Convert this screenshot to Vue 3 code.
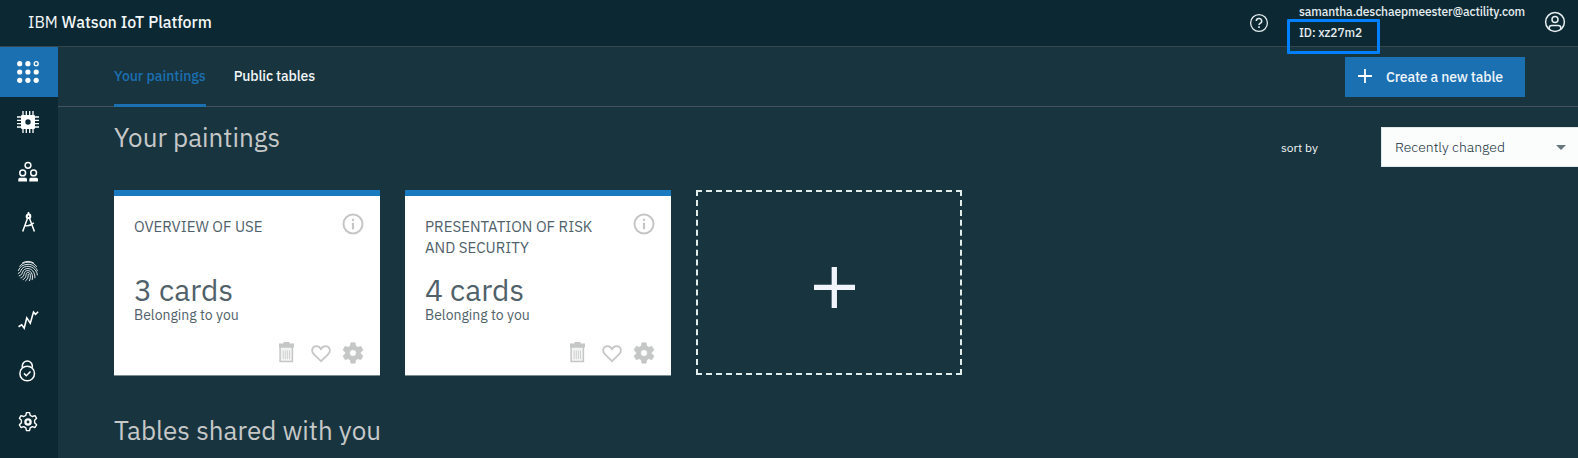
<script setup>
const tabs = [
  { label: 'Your paintings', active: true },
  { label: 'Public tables', active: false }
]
const cards = [
  { title: 'OVERVIEW OF USE', count: '3 cards' },
  { title: 'PRESENTATION OF RISK AND SECURITY', count: '4 cards' }
]
const nav = ['boards', 'devices', 'members', 'apps', 'access', 'usage', 'security', 'settings']
</script>

<template>
  <div class="app">
    <header class="header">
      <div class="brand"><span class="ibm">IBM</span> Watson IoT Platform</div>
      <svg class="help" viewBox="0 0 20 20" fill="none" stroke="#e6edf0">
        <circle cx="10" cy="10" r="8.4" stroke-width="1.3" />
        <path d="M7.3 8.1a2.7 2.5 0 1 1 3.9 2.2c-.9.5-1.2.8-1.2 1.7" stroke-width="1.5" />
        <path d="M10 13.3v1.6" stroke-width="1.6" />
      </svg>
      <div class="account">
        <div class="email">samantha.deschaepmeester@actility.com</div>
        <div class="org">ID: xz27m2<span class="highlight"></span></div>
      </div>
      <svg class="user" viewBox="0 0 22 22" fill="none" stroke="#e6edf0" stroke-width="1.5">
        <circle cx="11" cy="11" r="9.4" />
        <circle cx="11" cy="8.4" r="3" />
        <path d="M5.2 18.2v-1.3c0-1.6 1-2.5 2.5-2.5h6.6c1.5 0 2.5.9 2.5 2.5v1.3" />
      </svg>
    </header>

    <div class="body">
      <nav class="side">
        <a v-for="item in nav" :key="item" class="item" :class="[item, { active: item === 'boards' }]">
          <svg class="glyph" viewBox="0 0 24 24" fill="none" stroke="#fff">
            <template v-if="item === 'boards'">
              <g fill="#fff" stroke="none">
                <circle cx="3.7" cy="3.7" r="2.6" /><circle cx="11.9" cy="3.7" r="2.6" />
                <circle cx="3.7" cy="12" r="2.6" /><circle cx="11.9" cy="12" r="2.6" /><circle cx="20.2" cy="12" r="2.6" />
                <circle cx="3.7" cy="20.3" r="2.6" /><circle cx="11.9" cy="20.3" r="2.6" /><circle cx="20.2" cy="20.3" r="2.6" />
              </g>
              <circle cx="20.2" cy="3.7" r="2" stroke-width="1.3" />
            </template>
            <template v-else-if="item === 'devices'">
              <path d="M7 1v22M10.300 1v22M13.700 1v22M17 1v22M1 7h22M1 10.300h22M1 13.700h22M1 17h22" stroke-width="1.3" />
              <rect x="5" y="5" width="14" height="14" rx="1" fill="#fff" stroke="none" />
              <circle cx="12" cy="12" r="2.7" fill="#0d2a34" stroke="none" />
            </template>
            <template v-else-if="item === 'members'">
              <g stroke-width="1.5">
                <circle cx="12" cy="5.3" r="2.9" /><circle cx="6.7" cy="12.9" r="2.9" /><circle cx="17.6" cy="12.9" r="2.9" />
              </g>
              <path d="M2.300 21.500v-2.200q0-1.500 1.500-1.500h5.700q1.500 0 1.500 1.500v2.200zM13.300 21.500v-2.200q0-1.500 1.500-1.500h5.700q1.500 0 1.500 1.500v2.200z" fill="#fff" stroke="none" />
            </template>
            <template v-else-if="item === 'apps'">
              <path d="M12.500 2v3M11.600 8 6.700 21.500M13.400 8l5 13.500M9.300 15.500q4.500 1.200 8.500-2.700" stroke-width="1.5" />
              <circle cx="12.5" cy="6.2" r="1.8" stroke-width="2.1" />
            </template>
            <template v-else-if="item === 'access'">
              <g stroke-width=".95" stroke-linecap="round" opacity=".92">
                <path d="M6.500 3.800Q12 .7 17.500 3.900M3.600 7.300Q6.500 3.400 12 3.200t8.500 4.300M2.400 11.500Q4.500 5.500 12 5.300c4.500 0 8 2.800 9.400 6.500M2.300 14.500c2.300-.6 2.300-3 3.600-4.700 3-3.500 9.500-3.200 12.700.6 1.800 2.100 2.700 3.500 2.700 5.500M3.200 16.900c3-.7 2.800-3.500 4.200-5.500 2.500-2.600 6.800-2.400 9.300.4 1.800 2.200 2.300 4.500 2.200 7M4.900 18.900c3.600-1 2.800-4.300 4.100-6.200 1.700-1.800 4.700-1.300 6.200.7 1.400 2.200 1.600 4.800 1 7.300M7 20.600c3.700-1.600 2.400-4.800 3.700-6.700.9-1 2.500-.5 3.200.8 1 2.200.5 4.800-.5 7M9.700 21.700c2.300-1.700 2.500-4 2.600-6.500" />
              </g>
            </template>
            <template v-else-if="item === 'usage'">
              <path d="m2.500 18.700 3.200-1.900 2.500 3.400 2.600-10.300 3.500 5.200 3.200-11 2.100 2.300 2.500-2.600" stroke-width="1.6" />
            </template>
            <template v-else-if="item === 'security'">
              <circle cx="11.2" cy="14.5" r="7.3" stroke-width="1.5" />
              <path d="M6.300 8.700V7a5 5 0 0 1 10 0v1.700M8 14.400l2.300 2.300 4.200-4.200" stroke-width="1.5" />
            </template>
            <template v-else>
              <path d="M9.800 5.300 10.500 2.600h3l.7 2.700 2.100 1.200 2.700-.8 1.600 2.600-2 2v2.500l2 2-1.600 2.700-2.700-.8-2.100 1.200-.7 2.700h-3l-.7-2.700-2.100-1.200-2.700.8-1.600-2.700 2-2v-2.500l-2-2L5 5.700l2.700.8z" stroke-width="1.4" stroke-linejoin="round" />
              <circle cx="12" cy="12" r="2.6" stroke-width="2.3" />
            </template>
          </svg>
        </a>
      </nav>

      <main class="main">
        <div class="tabbar">
          <a v-for="t in tabs" :key="t.label" class="tab" :class="{ active: t.active }">{{ t.label }}</a>
          <button class="create">
            <svg viewBox="0 0 14 14" class="plus"><path d="M7 0v14M0 7h14" stroke="#fff" stroke-width="1.8" /></svg>
            Create a new table
          </button>
        </div>

        <div class="toolbar">
          <h1 class="heading">Your paintings</h1>
          <span class="sort-label">sort by</span>
          <div class="select">Recently changed
            <svg class="caret" viewBox="0 0 10 5"><path d="M0 0h10L5 5z" fill="#65777b" /></svg>
          </div>
        </div>

        <div class="cards">
          <article v-for="c in cards" :key="c.title" class="card">
            <div class="card-head">
              <h2 class="card-title">{{ c.title }}</h2>
              <svg class="info" viewBox="0 0 22 22" fill="none" stroke="#c5c6c6">
                <circle cx="11" cy="11" r="9.5" stroke-width="2" />
                <path d="M11 9.700v6.500M11 5.800v2.300" stroke-width="2.2" />
              </svg>
            </div>
            <div class="count">{{ c.count }}</div>
            <div class="owner">Belonging to you</div>
            <div class="actions">
              <svg class="trash" viewBox="0 0 15 21">
                <path d="M4.500 0h6v1.500H15V5.500H0V1.500h4.500z" fill="#c5c6c6" />
                <rect x="1.1" y="5" width="12.3" height="14.5" fill="#f3f3f3" stroke="#c5c6c6" stroke-width="1.5" />
                <path d="M4.200 8.500v8.500M6.300 8.500v8.500M8.400 8.500v8.500M10.500 8.500v8.500" stroke="#cfd0d0" />
              </svg>
              <svg class="heart" viewBox="0 0 20 18"><path d="M10 16.200 3 9.300C-.7 5.500 1.800 1.100 5.500 1.100c2 0 3.500 1.200 4.500 3 1-1.800 2.500-3 4.500-3 3.700 0 6.200 4.400 2.500 8.200z" fill="none" stroke="#c5c6c6" stroke-width="1.8" /></svg>
              <svg class="gear" viewBox="0 0 22 22">
                <path fill="#c5c6c6" fill-rule="evenodd" stroke="#c5c6c6" stroke-width=".6" stroke-linejoin="round" d="M8.900.8h4.200l.7 3.300 2 1.200 3.100-1 2.100 3.700-2.300 2.200v1.600l2.300 2.200-2.100 3.700-3.100-1-2 1.200-.7 3.300H8.900l-.7-3.300-2-1.200-3.100 1L1 14l2.300-2.200v-1.600L1 8l2.100-3.700 3.100 1 2-1.200zM11 7.700a3.300 3.300 0 1 0 0 6.600 3.300 3.300 0 0 0 0-6.600z" />
              </svg>
            </div>
          </article>
          <div class="new-card">
            <svg class="big-plus" viewBox="0 0 41 41"><path d="M20.3 0v41M0 20.300h41" stroke="#f1f5fb" stroke-width="5.3" /></svg>
          </div>
        </div>

        <h1 class="heading shared">Tables shared with you</h1>
      </main>
    </div>
  </div>
</template>

<style>
body { background: #18343f; overflow: hidden; }
</style>

<style scoped>
* { box-sizing: border-box; }
svg { display: block; flex: none; }
.app { height: 458px; display: flex; flex-direction: column; overflow: hidden; background: #18343f; font-family: "IBM Plex Sans", Roboto, "Liberation Sans", sans-serif; color: #f3f7f8; }
.header { flex: none; height: 47px; display: flex; align-items: flex-start; padding: 0 12px 0 28px; background: #0c2933; border-bottom: 1px solid #35474c; }
.brand { flex: 1; line-height: 44px; font-size: 16px; font-weight: 500; white-space: nowrap; }
.ibm { font-weight: 400; }
.help { width: 20px; height: 20px; margin: 13px 30px 0 0; }
.account { width: 246px; padding-top: 1px; font-size: 12px; line-height: 21px; font-weight: 500; color: #e6edf0; white-space: nowrap; }
.email { letter-spacing: -.125px; }
.org { position: relative; letter-spacing: -.1px; }
.highlight { position: absolute; left: -12px; top: -3px; width: 93px; height: 35px; border: 3px solid #0080ff; border-radius: 1px; z-index: 2; }
.user { width: 22px; height: 22px; margin-top: 11px; margin-left: -1px; }
.body { flex: 1; min-height: 0; display: flex; }
.side { flex: none; width: 58px; background: #0c2933; }
.item { height: 50px; display: flex; align-items: center; padding-left: 16px; }
.item.active { background: #1b70b2; }
.glyph { width: 24px; height: 24px; }
.access .glyph, .security .glyph { margin-top: -2px; }
.usage .glyph { margin-top: -4px; }
.main { flex: 1; min-width: 0; }
.tabbar { height: 60px; display: flex; align-items: flex-start; gap: 28px; padding: 0 53px 0 56px; border-bottom: 1px solid #43535b; }
.tab { height: 60px; line-height: 59px; font-size: 14px; font-weight: 500; letter-spacing: -.14px; border-bottom: 3px solid transparent; white-space: nowrap; }
.tab.active { color: #1b70b2; border-color: #1b70b2; letter-spacing: 0; }
.create { margin: 10px 0 0 auto; width: 180px; height: 40px; padding: 0 0 0 13px; display: flex; align-items: center; gap: 14px; border: 0; background: #1b70b2; color: #eef5fa; font: 500 14px/40px "IBM Plex Sans", Roboto, sans-serif; letter-spacing: -.17px; white-space: nowrap; }
.plus { width: 14px; height: 14px; margin-top: -3px; }
.toolbar { height: 83px; display: flex; align-items: flex-start; padding-left: 56px; }
.heading { margin: 0; font-size: 26px; line-height: 32px; font-weight: 400; color: #c6c8c8; white-space: nowrap; }
.toolbar .heading { flex: 1; padding-top: 14px; }
.sort-label { width: 100px; margin-top: 30px; font-size: 12px; line-height: 22px; }
.select { width: 197px; height: 40px; margin-top: 20px; padding: 0 12px 0 13px; display: flex; align-items: center; justify-content: space-between; background: #fbfdfd; border: 1px solid #dfe8ea; border-right: 0; color: #152f3a; font-size: 14px; font-weight: 300; }
.caret { width: 10px; height: 5px; }
.cards { display: flex; gap: 25px; padding-left: 56px; }
.card { width: 266px; height: 185px; padding: 17px 16px 0 20px; display: flex; flex-direction: column; border-top: 6px solid #1a7abf; background: #fff; color: #50616a; box-shadow: 0 1px 0 #7c8d92; }
.card-head { display: flex; justify-content: space-between; height: 59px; }
.card-title { margin: 3px 0 0; width: 180px; font-size: 15px; line-height: 21px; font-weight: 400; letter-spacing: 0; }
.info { width: 22px; height: 22px; margin: -.5px .5px 0 0; }
.count { font-size: 30px; line-height: 36px; font-weight: 400; }
.owner { margin-top: -1px; font-size: 14px; line-height: 16px; }
.actions { display: flex; align-items: flex-start; justify-content: flex-end; margin: 19px .5px 0 0; }
.trash { width: 15px; height: 21px; }
.heart { width: 20px; height: 18px; margin: 3px 11px 0 17px; }
.gear { width: 22px; height: 22px; margin-top: -.5px; }
.new-card { width: 266px; height: 185px; display: flex; align-items: center; justify-content: center; border: 2px dashed #e1eeec; }
.big-plus { width: 41px; height: 41px; margin: 10px 0 0 11px; }
.shared { padding: 39px 0 0 56px; }
</style>
